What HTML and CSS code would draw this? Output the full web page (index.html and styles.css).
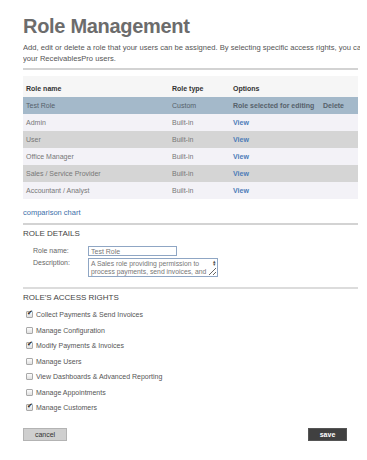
FILE: index.html
```html
<!DOCTYPE html>
<html lang="en">
<head>
  <meta charset="UTF-8" />
  <title>Role Management</title>
  <link rel="stylesheet" href="styles.css">
</head>
<body>

<div class="page">
  <h1>Role Management</h1>
  <p class="intro">
    <span>Add, edit or delete a role that your users can be assigned. By selecting specific access rights, you can control what</span>
    <span>your ReceivablesPro users.</span>
  </p>

  <hr class="rule">

  <table class="roles">
    <thead>
      <tr>
        <th class="col-name">Role name</th>
        <th class="col-type">Role type</th>
        <th class="col-opt">Options</th>
        <th></th>
      </tr>
    </thead>
    <tbody>
      <tr class="selected">
        <td>Test Role</td>
        <td>Custom</td>
        <td class="strong">Role selected for editing</td>
        <td class="strong">Delete</td>
      </tr>
      <tr class="light">
        <td>Admin</td>
        <td>Built-in</td>
        <td><a href="#">View</a></td>
        <td></td>
      </tr>
      <tr class="dark">
        <td>User</td>
        <td>Built-in</td>
        <td><a href="#">View</a></td>
        <td></td>
      </tr>
      <tr class="light">
        <td>Office Manager</td>
        <td>Built-in</td>
        <td><a href="#">View</a></td>
        <td></td>
      </tr>
      <tr class="dark">
        <td>Sales / Service Provider</td>
        <td>Built-in</td>
        <td><a href="#">View</a></td>
        <td></td>
      </tr>
      <tr class="light">
        <td>Accountant / Analyst</td>
        <td>Built-in</td>
        <td><a href="#">View</a></td>
        <td></td>
      </tr>
    </tbody>
  </table>

  <a class="chart-link" href="#">comparison chart</a>

  <hr class="rule sep-details">

  <h2>Role Details</h2>
  <div class="details">
    <label for="roleName">Role name:</label>
    <input id="roleName" type="text" value="Test Role">
    <label for="roleDesc">Description:</label>
    <div class="desc-wrap">
      <textarea id="roleDesc">A Sales role providing permission to process payments, send invoices, and manage customers.</textarea>
      <span class="spin">&#9652;<br>&#9662;</span>
    </div>
  </div>

  <hr class="rule sep-rights">

  <h2>Role's Access Rights</h2>
  <ul class="rights">
    <li><label><input type="checkbox" checked> Collect Payments &amp; Send Invoices</label></li>
    <li><label><input type="checkbox"> Manage Configuration</label></li>
    <li><label><input type="checkbox" checked> Modify Payments &amp; Invoices</label></li>
    <li><label><input type="checkbox"> Manage Users</label></li>
    <li><label><input type="checkbox"> View Dashboards &amp; Advanced Reporting</label></li>
    <li><label><input type="checkbox"> Manage Appointments</label></li>
    <li><label><input type="checkbox" checked> Manage Customers</label></li>
  </ul>

  <div class="actions">
    <button class="btn-cancel">cancel</button>
    <button class="btn-save">save</button>
  </div>
</div>

</body>
</html>
```

FILE: styles.css
```css
* { box-sizing: border-box; }

body {
  margin: 0;
  font-family: 'Liberation Sans', Arial, sans-serif;
  color: #666;
  background: #fff;
  overflow: hidden;
}

.page {
  width: 335px;
  margin-left: 23px;
  padding-top: 14px;
}

h1 {
  margin: 0;
  font-size: 20px;
  line-height: 24px;
  font-weight: bold;
  letter-spacing: -0.3px;
  color: #6c6c6c;
}

.intro {
  margin: 4px 0 0;
  font-size: 7.6px;
  line-height: 11px;
  color: #555;
  white-space: nowrap;
  width: 337px;
  overflow: hidden;
}

.intro span {
  display: block;
}

.rule {
  margin: 4px 0 0;
  border: none;
  border-top: 2px solid #d3d3d3;
}

.sep-details { margin-top: 5px; }
.sep-rights { margin-top: 10px; border-top-color: #dcdcdc; }

/* roles table */
.roles {
  width: 100%;
  border-collapse: collapse;
  margin-top: 6px;
  font-size: 7px;
  white-space: nowrap;
}

.roles th {
  text-align: left;
  font-weight: bold;
  color: #333;
  background: #f6f6f6;
  padding: 8px 3px 3px;
  line-height: 10px;
}

.roles td {
  height: 17px;
  padding: 0 3px;
  line-height: 10px;
  color: #777;
}

.col-name { width: 146px; }
.col-type { width: 61px; }
.col-opt { width: 90px; }

.roles tr.selected td { background: #a4b9ca; color: #56616a; }
.roles tr.light td { background: #f3f2f7; }
.roles tr.dark td { background: #d5d5d5; }

.roles td.strong {
  font-weight: bold;
  color: #333;
}

.roles a {
  color: #4c7cb8;
  font-weight: bold;
  text-decoration: none;
}

.chart-link {
  display: block;
  margin-top: 8px;
  font-size: 7.5px;
  line-height: 11px;
  color: #3d6fa9;
  text-decoration: none;
}

h2 {
  margin: 3px 0 0;
  font-size: 8px;
  line-height: 12px;
  font-weight: normal;
  text-transform: uppercase;
  color: #444;
}

/* details form */
.details {
  display: grid;
  grid-template-columns: 55px auto;
  align-items: start;
  row-gap: 2px;
  padding-left: 10px;
  margin-top: 6px;
  font-size: 7px;
}

.details label {
  line-height: 10px;
  color: #666;
}

.details input {
  width: 89px;
  height: 10px;
  padding: 0 2px;
  border: 1px solid #8fa6c4;
  font: 7px 'Liberation Sans', Arial, sans-serif;
  color: #777;
}

.desc-wrap {
  position: relative;
  width: 130px;
  height: 19px;
}

.desc-wrap textarea {
  display: block;
  width: 100%;
  height: 100%;
  padding: 1px 9px 0 2px;
  border: 1px solid #8fa6c4;
  font: 6.8px/8px 'Liberation Sans', Arial, sans-serif;
  color: #777;
  overflow: hidden;
  resize: both;
}

.spin {
  position: absolute;
  top: 2px;
  right: 2px;
  font-size: 5px;
  line-height: 3px;
  color: #555;
}

/* access rights */
.rights {
  list-style: none;
  margin: 3px 0 0;
  padding: 0 0 0 3px;
  font-size: 7px;
}

.rights li {
  height: 15.5px;
  display: flex;
  align-items: center;
}

.rights label {
  display: flex;
  align-items: center;
  gap: 3px;
  color: #555;
}

.rights input {
  appearance: none;
  margin: 0;
  width: 7px;
  height: 7px;
  border: 1px solid #a9a9a9;
  border-radius: 1px;
  background: linear-gradient(#fdfdfd, #e0e0e0);
  position: relative;
}

.rights input:checked::after {
  content: '\2714';
  position: absolute;
  left: 0;
  top: -3px;
  font-size: 7px;
  color: #222;
}

/* buttons */
.actions {
  display: flex;
  justify-content: space-between;
  margin-top: 12px;
  padding-right: 11px;
}

.actions button {
  height: 13px;
  padding: 0;
  font: 7px 'Liberation Sans', Arial, sans-serif;
  cursor: pointer;
}

.btn-cancel {
  width: 44px;
  background: #cfcfcf;
  border: 1px solid #b3b3b3;
  color: #333;
}

.btn-save {
  width: 39px;
  background: #404040;
  border: 1px solid #555;
  color: #fff;
  font-weight: bold !important;
}
```
